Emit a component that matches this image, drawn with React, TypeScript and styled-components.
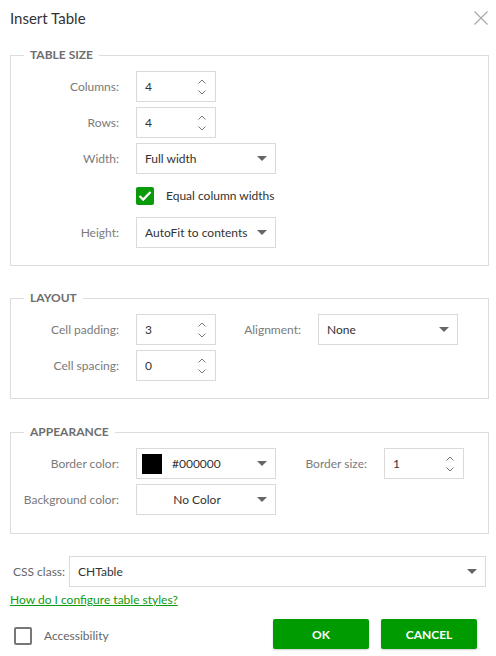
import styled, { createGlobalStyle } from "styled-components";

const GlobalStyle = createGlobalStyle`
  html, body {
    margin: 0;
    padding: 0;
    background: #fff;
  }
  body {
    font-family: Lato, "Open Sans", sans-serif;
    font-size: 12px;
    line-height: 16px;
    color: #333;
  }
  * { box-sizing: border-box; }
`

const Dialog = styled.div`
  width: 496px;
  height: 656px;
  padding: 0 10px;
  position: relative;
`

const Header = styled.div`
  height: 36px;
  display: flex;
  align-items: center;
  justify-content: space-between;
`

const Title = styled.h1`
  margin: 0;
  font-size: 15px;
  font-weight: 400;
  color: #333;
`

const Close = styled.button`
  border: 0;
  background: none;
  padding: 0;
  margin-right: -3px;
  width: 16px;
  height: 16px;
  display: flex;
  cursor: pointer;
`

const Fieldset = styled.fieldset<{ $top: number; $bottom: number }>`
  margin: ${p => p.$top}px 0 0;
  width: 479px;
  border: 1px solid #dcdcdc;
  padding: 8px 0 ${p => p.$bottom}px;
`

const Legend = styled.legend`
  margin-left: 13px;
  padding: 0 6px;
  font-size: 12px;
  font-weight: 700;
  color: #6e6e6e;
  line-height: 16px;
`

const Grid = styled.div<{ $cols: string }>`
  display: grid;
  grid-template-columns: ${p => p.$cols};
  column-gap: 17px;
  row-gap: 5px;
  align-items: center;
`

const Label = styled.label`
  text-align: right;
  color: #7a7a7a;
  white-space: nowrap;
`

const Box = styled.div<{ $w: number }>`
  width: ${p => p.$w}px;
  height: 31px;
  border: 1px solid #dadada;
  display: flex;
  align-items: center;
  padding: 0 8px;
  color: #333;
  background: #fff;
`

const Value = styled.span<{ $center?: boolean }>`
  flex: 1;
  overflow: hidden;
  white-space: nowrap;
  text-align: ${p => (p.$center ? "center" : "left")};
  margin-right: 8px;
`

const Swatch = styled.span`
  width: 20px;
  height: 20px;
  background: #000;
  margin: 0 10px 0 -3px;
`

const CheckRow = styled.div`
  height: 33px;
  display: flex;
  align-items: center;
  gap: 12px;
  color: #333;
  white-space: nowrap;
`

const Check = styled.span<{ $on?: boolean }>`
  width: 18px;
  height: 18px;
  border-radius: 2px;
  display: flex;
  align-items: center;
  justify-content: center;
  background: ${p => (p.$on ? "#0a9a0a" : "#fff")};
  border: ${p => (p.$on ? "none" : "2px solid #777")};
`

const ClassRow = styled.div`
  margin-top: 22px;
  display: flex;
  align-items: center;
  gap: 4px;
`

const ClassLabel = styled.label`
  color: #666;
  padding-left: 3px;
  white-space: nowrap;
`

const HelpLink = styled.a`
  display: block;
  margin-top: 5px;
  color: #109a10;
  text-decoration: underline;
  line-height: 16px;
`

const Footer = styled.div`
  margin-top: 11px;
  display: flex;
  align-items: center;
  justify-content: space-between;
  padding: 0 9px 0 4px;
`

const Accessibility = styled.div`
  display: flex;
  align-items: center;
  gap: 12px;
  color: #666;
  padding-top: 4px;
`

const Buttons = styled.div`
  display: flex;
  gap: 12px;
`

const Button = styled.button`
  width: 96px;
  height: 30px;
  border: 0;
  border-radius: 2px;
  background: #009b00;
  color: #fff;
  font-family: inherit;
  font-size: 12px;
  font-weight: 700;
  box-shadow: 0 1px 2px rgba(0, 0, 0, 0.2);
`

const Spin = () => (
  <svg width="10" height="20" viewBox="0 0 10 20">
    <path d="M1.5 6.5 L5 3 L8.5 6.5" fill="none" stroke="#777" strokeWidth="1" />
    <path d="M1.5 13.5 L5 17 L8.5 13.5" fill="none" stroke="#777" strokeWidth="1" />
  </svg>
)

const Caret = () => (
  <svg width="10" height="6" viewBox="0 0 10 6">
    <path d="M0 0 L10 0 L5 5 Z" fill="#666" />
  </svg>
)

const Spinner = ({ value }: { value: string }) => (
  <Box $w={80}>
    <Value>{value}</Value>
    <Spin />
  </Box>
)

const Select = ({ value, w = 140, center, swatch }: { value: string; w?: number; center?: boolean; swatch?: boolean }) => (
  <Box $w={w}>
    {swatch && <Swatch />}
    <Value $center={center}>{value}</Value>
    <Caret />
  </Box>
)

const Tick = () => (
  <svg width="14" height="12" viewBox="0 0 14 12">
    <path d="M1.5 6 L5.2 9.6 L12.5 2" fill="none" stroke="#fff" strokeWidth="2.2" />
  </svg>
)

export default function App() {
  return (
    <>
      <GlobalStyle />
      <Dialog>
        <Header>
          <Title>Insert Table</Title>
          <Close aria-label="close">
            <svg width="16" height="16" viewBox="0 0 16 16">
              <path d="M1.5 1.5 L14.5 14.5 M14.5 1.5 L1.5 14.5" stroke="#a8a8a8" strokeWidth="1.2" />
            </svg>
          </Close>
        </Header>

        <Fieldset $top={11} $bottom={17}>
          <Legend>TABLE SIZE</Legend>
          <Grid $cols="108px 140px">
            <Label>Columns:</Label>
            <Spinner value="4" />
            <Label>Rows:</Label>
            <Spinner value="4" />
            <Label>Width:</Label>
            <Select value="Full width" />
            <span />
            <CheckRow>
              <Check $on>
                <Tick />
              </Check>
              Equal column widths
            </CheckRow>
            <Label>Height:</Label>
            <Select value="AutoFit to contents" />
          </Grid>
        </Fieldset>

        <Fieldset $top={24} $bottom={17}>
          <Legend>LAYOUT</Legend>
          <Grid $cols="108px 80px 68px 140px">
            <Label>Cell padding:</Label>
            <Spinner value="3" />
            <Label>Alignment:</Label>
            <Select value="None" />
            <Label>Cell spacing:</Label>
            <Spinner value="0" />
          </Grid>
        </Fieldset>

        <Fieldset $top={25} $bottom={18}>
          <Legend>APPEARANCE</Legend>
          <Grid $cols="108px 140px 74px 80px">
            <Label>Border color:</Label>
            <Select value="#000000" swatch />
            <Label>Border size:</Label>
            <Spinner value="1" />
            <Label>Background color:</Label>
            <Select value="No Color" center />
          </Grid>
        </Fieldset>

        <ClassRow>
          <ClassLabel>CSS class:</ClassLabel>
          <Select value="CHTable" w={418} />
        </ClassRow>
        <HelpLink href="#">How do I configure table styles?</HelpLink>

        <Footer>
          <Accessibility>
            <Check />
            Accessibility
          </Accessibility>
          <Buttons>
            <Button>OK</Button>
            <Button>CANCEL</Button>
          </Buttons>
        </Footer>
      </Dialog>
    </>
  );
}
